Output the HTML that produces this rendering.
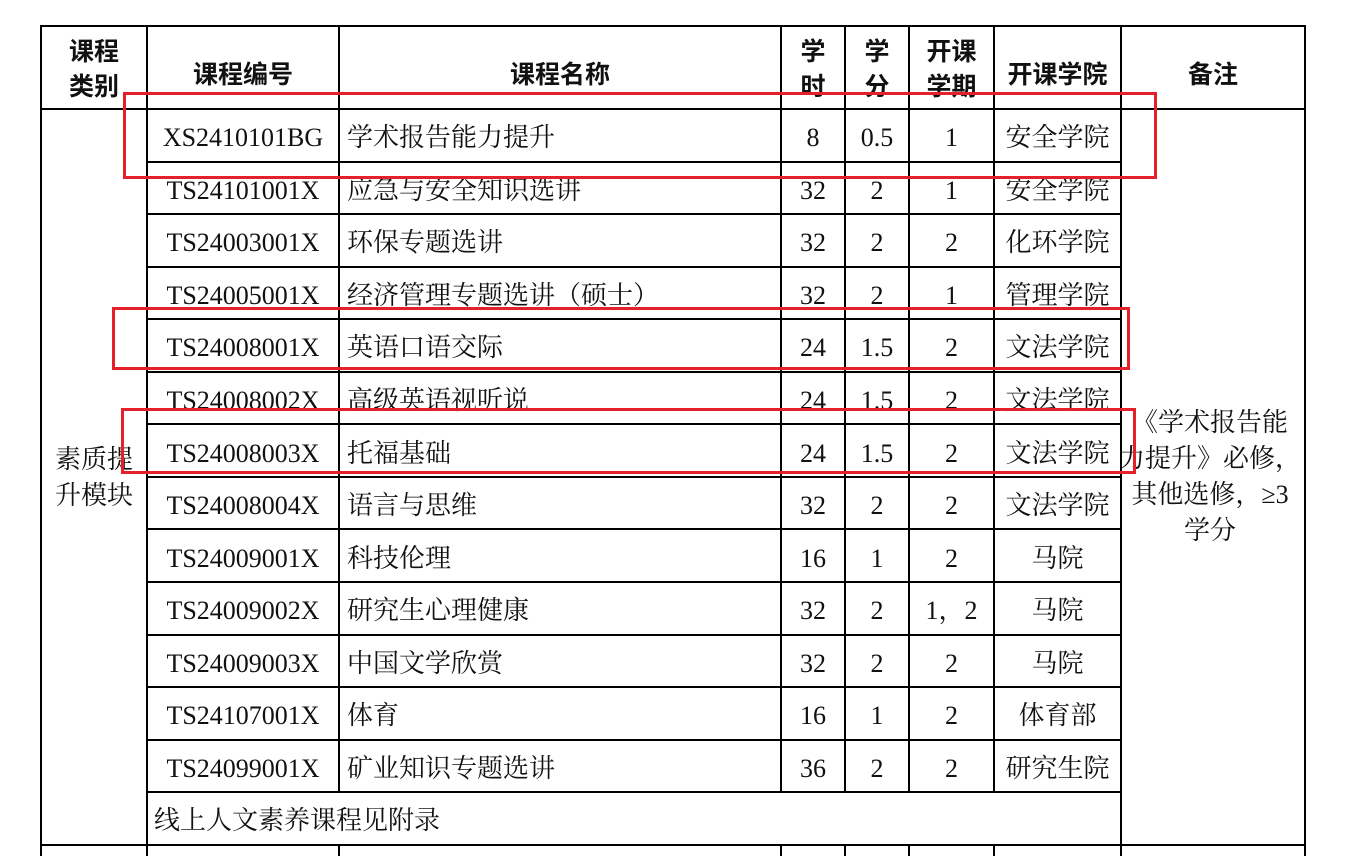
<!DOCTYPE html>
<html><head><meta charset="utf-8"><style>
html,body{margin:0;padding:0;background:#fff;width:1368px;height:856px;overflow:hidden;position:relative}
.l{position:absolute;background:#000}
.t{position:absolute;font-family:"Liberation Serif","Noto Serif CJK SC",serif;font-size:26px;color:#111;white-space:nowrap;line-height:28px}
.r{position:absolute;border:3px solid #e5202a;box-sizing:border-box}
</style></head><body>
<script>
var X=[40,146,338,780,844,908,993,1120,1304];
var H0=25,H1=108,RH=52.55;
function L(x,y,w,h){document.write('<div class="l" style="left:'+x+'px;top:'+y+'px;width:'+w+'px;height:'+h+'px"></div>');}
function T(s,x,y,w,al,extra){document.write('<div class="t" style="left:'+x+'px;top:'+(y-14)+'px;width:'+w+'px;text-align:'+al+';'+(extra||'')+'">'+s+'</div>');}
X.forEach(function(x){L(x,H0,2,856-H0);});
L(X[0],H0,X[8]-X[0]+2,2);
L(X[0],H1,X[8]-X[0]+2,2);
var bot=H1+14*RH;
L(X[0],Math.round(bot),X[8]-X[0]+2,2);
for(var i=1;i<14;i++){L(X[1],Math.round(H1+i*RH),X[7]-X[1]+2,2);}
document.write('<div style="position:absolute;background:#fff;left:'+(X[2])+'px;top:'+(Math.round(H1+13*RH)+2)+'px;width:'+(X[7]-X[2])+'px;height:'+(Math.round(bot)-Math.round(H1+13*RH)-2)+'px"></div>');
function C(i){return [X[i]+2,X[i+1]-X[i]-2];}
var hd=[["课程<br>类别",0],["课程编号",1],["课程名称",2],["学<br>时",3],["学<br>分",4],["开课<br>学期",5],["开课学院",6],["备注",7]];
hd.forEach(function(h){var c=C(h[1]);var two=h[0].indexOf('<br>')>0;T(h[0],c[0],two?52:70,c[1],'center','font-weight:bold;font-family:\'Noto Sans CJK SC\',sans-serif;font-size:25px;line-height:35px;'+(two?'top:33px':''));});
var rows=[["XS2410101BG","学术报告能力提升","8","0.5","1","安全学院"],
["TS24101001X","应急与安全知识选讲","32","2","1","安全学院"],
["TS24003001X","环保专题选讲","32","2","2","化环学院"],
["TS24005001X","经济管理专题选讲（硕士）","32","2","1","管理学院"],
["TS24008001X","英语口语交际","24","1.5","2","文法学院"],
["TS24008002X","高级英语视听说","24","1.5","2","文法学院"],
["TS24008003X","托福基础","24","1.5","2","文法学院"],
["TS24008004X","语言与思维","32","2","2","文法学院"],
["TS24009001X","科技伦理","16","1","2","马院"],
["TS24009002X","研究生心理健康","32","2","1，2","马院"],
["TS24009003X","中国文学欣赏","32","2","2","马院"],
["TS24107001X","体育","16","1","2","体育部"],
["TS24099001X","矿业知识专题选讲","36","2","2","研究生院"]];
rows.forEach(function(r,i){var y=Math.round(H1+i*RH+RH/2)+4;
var c=C(1);T(r[0],c[0],y,c[1],'center');
T(r[1],347,y,420,'left');
[3,4,5,6].forEach(function(k,j){var c=C(k);T(r[2+j],c[0],y,c[1],'center');});});
T("线上人文素养课程见附录",154,Math.round(H1+13*RH+RH/2)+4,500,'left');
T("素质提<br>升模块",X[0]+2,478,X[1]-X[0]-2,'center','line-height:36px;top:442px');
T("《学术报告能<br>力提升》必修，<br>其他选修，≥3<br>学分",X[7]-14,482,X[8]-X[7]+24,'center','line-height:36px;top:405px');
</script>
<div class="r" style="left:123px;top:92px;width:1034px;height:87px"></div>
<div class="r" style="left:112px;top:307px;width:1018px;height:63px"></div>
<div class="r" style="left:121px;top:408px;width:1015px;height:66px"></div>
</body></html>
